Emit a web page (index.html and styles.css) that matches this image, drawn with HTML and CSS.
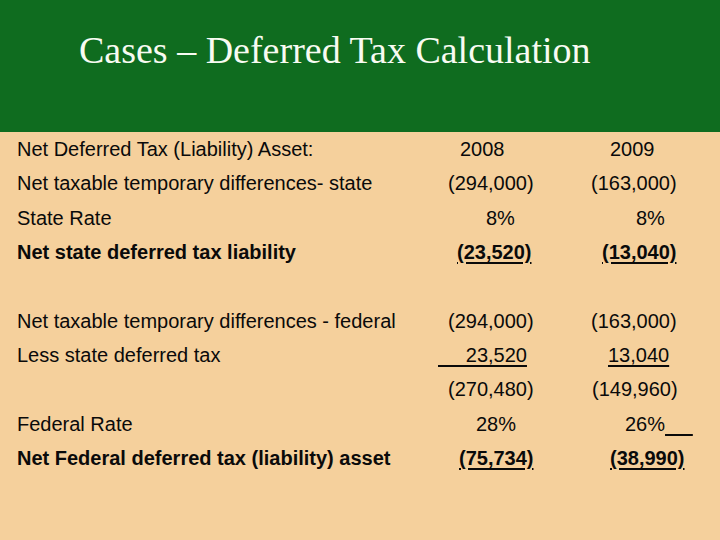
FILE: index.html
```html
<!DOCTYPE html>
<html lang="en">
<head>
<meta charset="utf-8">
<title>Cases – Deferred Tax Calculation</title>
<link rel="stylesheet" href="styles.css">
</head>
<body>
<div class="slide">
  <header class="title-bar">
    <h1 class="title">Cases – Deferred Tax Calculation</h1>
  </header>
  <section class="table">
    <div class="row">
      <div class="label">Net Deferred Tax (Liability) Asset:</div>
      <div class="val p22">2008</div>
      <div class="val p19">2009</div>
    </div>
    <div class="row">
      <div class="label">Net taxable temporary differences- state</div>
      <div class="val p10">(294,000)</div>
      <div class="val p0">(163,000)</div>
    </div>
    <div class="row">
      <div class="label">State Rate</div>
      <div class="val p48">8%</div>
      <div class="val p45">8%</div>
    </div>
    <div class="row strong">
      <div class="label">Net state deferred tax liability</div>
      <div class="val p19"><span class="ul">(23,520)</span></div>
      <div class="val p11"><span class="ul">(13,040)</span></div>
    </div>
    <div class="row">
      <div class="label"></div>
      <div class="val"></div>
      <div class="val"></div>
    </div>
    <div class="row">
      <div class="label">Net taxable temporary differences - federal</div>
      <div class="val p10">(294,000)</div>
      <div class="val p0">(163,000)</div>
    </div>
    <div class="row">
      <div class="label">Less state deferred tax</div>
      <div class="val p0"><span class="ul">&nbsp;&nbsp;&nbsp;&nbsp;&nbsp;23,520</span></div>
      <div class="val p17"><span class="ul">13,040</span></div>
    </div>
    <div class="row">
      <div class="label"></div>
      <div class="val p10">(270,480)</div>
      <div class="val p1">(149,960)</div>
    </div>
    <div class="row">
      <div class="label">Federal Rate</div>
      <div class="val p38">28%</div>
      <div class="val p34">26%<span class="ul">&nbsp;&nbsp;&nbsp;&nbsp;&nbsp;</span></div>
    </div>
    <div class="row strong">
      <div class="label">Net Federal deferred tax (liability) asset</div>
      <div class="val p21"><span class="ul">(75,734)</span></div>
      <div class="val p19"><span class="ul">(38,990)</span></div>
    </div>
  </section>
</div>
</body>
</html>
```

FILE: styles.css
```css
html, body {
  margin: 0;
  padding: 0;
}

body {
  width: 720px;
  height: 540px;
  overflow: hidden;
  background: #f5d09c;
}

.slide {
  width: 720px;
  height: 540px;
  background: #f5d09c;
  color: #0a0a0a;
  font-family: "Liberation Sans", Arial, sans-serif;
}

.title-bar {
  height: 132px;
  box-sizing: border-box;
  padding: 31px 0 0 79px;
  background: #0f6c1f;
}

.title {
  margin: 0;
  font-family: "Liberation Serif", "Times New Roman", serif;
  font-weight: normal;
  font-size: 38px;
  line-height: 38px;
  color: #f8fbf2;
  white-space: nowrap;
}

.table {
  padding-left: 17px;
}

.row {
  display: grid;
  grid-template-columns: 421px 153px 1fr;
  height: 34.35px;
  font-size: 20px;
  line-height: 34.35px;
  white-space: pre;
}

.label {
  white-space: nowrap;
}

.strong {
  font-weight: bold;
}

.ul {
  text-decoration: underline;
  text-decoration-thickness: 2px;
  text-underline-offset: 3px;
}

.p0 { padding-left: 0; }
.p1 { padding-left: 1px; }
.p10 { padding-left: 10px; }
.p11 { padding-left: 11px; }
.p17 { padding-left: 17px; }
.p19 { padding-left: 19px; }
.p21 { padding-left: 21px; }
.p22 { padding-left: 22px; }
.p34 { padding-left: 34px; }
.p38 { padding-left: 38px; }
.p45 { padding-left: 45px; }
.p48 { padding-left: 48px; }
```
